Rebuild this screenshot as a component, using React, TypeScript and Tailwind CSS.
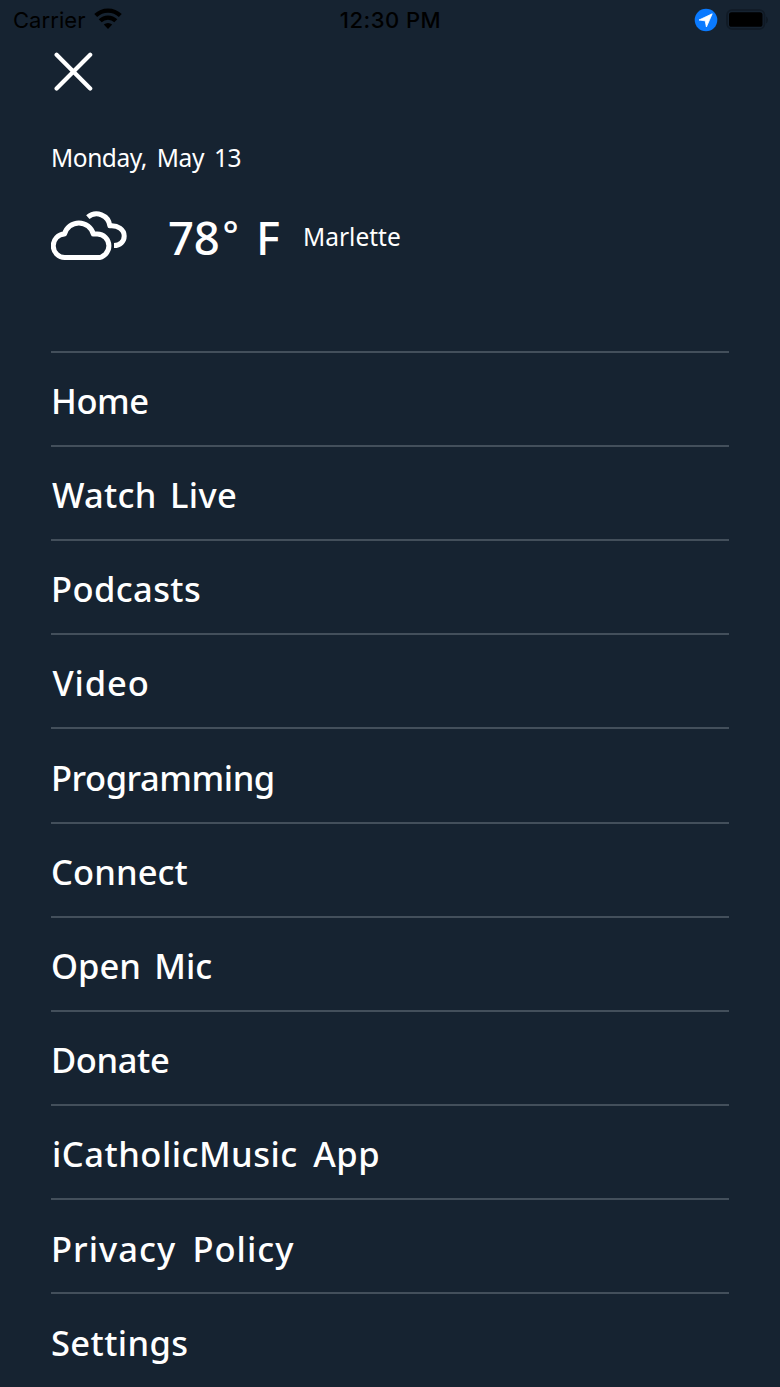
const menuItems = [
  { label: 'Home', spacing: 'tracking-[-0.4px]' },
  { label: 'Watch Live', spacing: 'ml-px tracking-[0.3px] [word-spacing:4px]' },
  { label: 'Podcasts', spacing: 'tracking-[0.4px]' },
  { label: 'Video', spacing: 'ml-[1.5px] tracking-[0.9px]' },
  { label: 'Programming', spacing: 'tracking-[-0.45px]' },
  { label: 'Connect', spacing: 'tracking-[0.1px]' },
  { label: 'Open Mic', spacing: '[word-spacing:4.5px]' },
  { label: 'Donate', spacing: 'tracking-[-0.4px]' },
  { label: 'iCatholicMusic App', spacing: 'ml-px tracking-[0.5px] [word-spacing:6px]' },
  { label: 'Privacy Policy', spacing: 'tracking-[1.05px] [word-spacing:6px]' },
  { label: 'Settings', spacing: 'tracking-[0.4px]' },
];

function WifiIcon() {
  return (
    <svg width="28" height="21" viewBox="0 0 28 21" fill="none" stroke="#000" strokeWidth="4.2" className="-mt-[3px]">
      <path d="M1.7 7.6 A17.5 17.5 0 0 1 26.3 7.6" />
      <path d="M6.2 12.8 A11 11 0 0 1 21.8 12.8" />
      <path d="M14 21 L9.8 16.6 A6 6 0 0 1 18.2 16.6 Z" fill="#000" stroke="none" />
    </svg>
  );
}

function LocationIcon() {
  return (
    <svg width="24" height="24" viewBox="0 0 24 24">
      <circle cx="12" cy="12" r="11.3" fill="#0a7aff" />
      <path d="M18.2 5.8 L5 12 L11.2 12.8 L12.4 19 Z" fill="#fff" stroke="#fff" strokeWidth="0.8" strokeLinejoin="round" />
    </svg>
  );
}

function BatteryIcon() {
  return (
    <svg width="42" height="22" viewBox="0 0 42 22">
      <rect x="1" y="1" width="37.5" height="19" rx="5" fill="none" stroke="#101a25" strokeWidth="1.6" />
      <rect x="3" y="3.2" width="33.5" height="14.6" rx="2.6" fill="#000" />
      <path d="M40 7.5 a4 4 0 0 1 0 7 Z" fill="#101a25" />
    </svg>
  );
}

function CloudsIcon() {
  return (
    <svg width="76" height="51" viewBox="0 0 76 51" fill="none" stroke="#fff" strokeWidth="5">
      <path d="M14 47.6 a11.5 11.8 0 0 1 -0.5 -23.6 a14.9 14.9 0 0 1 28.8 0 h3.9 a11.7 11.8 0 0 1 0 23.6 Z" strokeLinejoin="round" />
      <path d="M36.8 7.2 A13.3 13.3 0 0 1 58.8 15.8 C67 15 73.2 19.5 73.2 26 C73.2 31.5 69 35.6 63 35.6" strokeLinejoin="round" />
    </svg>
  );
}

export default function App() {
  return (
    <div className="h-[1387px] w-[780px] overflow-hidden bg-[#162331] font-['Noto_Sans',sans-serif] font-medium text-white">
      <div className="grid h-10 grid-cols-3 items-center pr-[12px] pl-[13px] font-['Inter',sans-serif] text-black">
        <div className="flex items-center gap-[9px]">
          <span className="text-[22px] font-normal tracking-[0.05px]">Carrier</span>
          <WifiIcon />
        </div>
        <span className="text-center text-[22px] tracking-[0.5px]">12:30 PM</span>
        <div className="flex items-center justify-end gap-[8px]">
          <LocationIcon />
          <BatteryIcon />
        </div>
      </div>

      <div className="px-[51px]">
        <button type="button" aria-label="Close" className="mt-[12px] ml-[3px] block">
          <svg width="40" height="40" viewBox="0 0 40 40" stroke="#fff" strokeWidth="4.2" strokeLinecap="round">
            <path d="M2.6 2.8 L36.2 36.4 M36.2 2.8 L2.6 36.4" />
          </svg>
        </button>

        <p className="mt-[48px] h-[36px] text-[24.5px] leading-[36px] font-normal tracking-[-0.45px] whitespace-nowrap [word-spacing:4px]">
          Monday, May 13
        </p>

        <div className="mt-[34px] flex h-[51px] items-center">
          <CloudsIcon />
          <div className="ml-[41px] flex w-[135px] pt-[4px] text-[45.5px] leading-[51px]">
            <span className="tracking-[-0.3px]">78</span>
            <span className="-mt-[3px] ml-[3px] w-[33.5px] text-[38px]">°</span>
            <span>F</span>
          </div>
          <span className="pt-[2px] text-[24.5px] leading-[36px] font-normal">Marlette</span>
        </div>

        <nav className="mt-[89.6px] w-[678px]">
          {menuItems.map((item) => (
            <a
              key={item.label}
              href="#"
              className="flex h-[94.2px] items-center border-t-2 border-[#434f5b] text-[34.5px] whitespace-nowrap"
            >
              <span className={`mt-[4px] ${item.spacing}`}>{item.label}</span>
            </a>
          ))}
        </nav>
      </div>
    </div>
  );
}
